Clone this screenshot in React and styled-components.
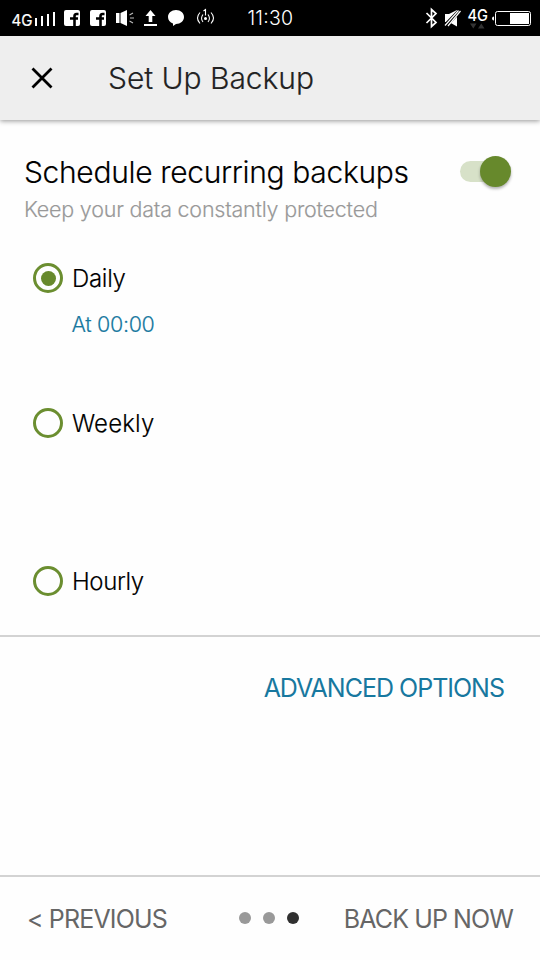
import React from "react";
import styled, { createGlobalStyle } from "styled-components";

const GlobalStyle = createGlobalStyle`
  * { box-sizing: border-box; }
  body { margin: 0; background: #fefefe; }
`;

const Screen = styled.div`
  display: flex;
  flex-direction: column;
  width: 540px;
  height: 960px;
  overflow: hidden;
  background: #fefefe;
  font-family: Inter, "Liberation Sans", sans-serif;
  font-weight: 300;
  -webkit-text-stroke: 0.15px;
  color: #000;
  white-space: nowrap;
`;

const StatusBar = styled.div`
  flex: none;
  height: 36px;
  background: #000;
`;

const StatusIcons = styled.svg`
  display: block;
  width: 540px;
  height: 36px;
  font-family: Inter, "Liberation Sans", sans-serif;
  -webkit-text-stroke: 0;
`;

const Header = styled.header`
  flex: none;
  display: flex;
  align-items: center;
  height: 84px;
  padding-left: 31px;
  gap: 55px;
  background: #eee;
  box-shadow: 0 1px 5px rgba(0, 0, 0, 0.42);
`;

const CloseButton = styled.button`
  display: flex;
  padding: 0;
  border: 0;
  background: none;
`;

const Title = styled.h1`
  margin: 0;
  font-size: 30px;
  font-weight: 300;
  line-height: 40px;
  letter-spacing: -0.05px;
  color: #222;
`;

const Schedule = styled.section`
  flex: none;
  height: 517px;
  padding: 32px 29px 0 24px;
  border-bottom: 2px solid #d3d3d3;
`;

const SettingRow = styled.div`
  display: flex;
  justify-content: space-between;
  align-items: center;
  height: 40px;
`;

const SettingTitle = styled.h2`
  margin: 0;
  font-size: 30px;
  font-weight: 300;
  line-height: 40px;
  letter-spacing: -0.34px;
`;

const Track = styled.div`
  display: flex;
  align-items: center;
  justify-content: flex-end;
  width: 51px;
  height: 21px;
  margin-bottom: 1px;
  border-radius: 11px;
  background: #d7e1c8;
`;

const Thumb = styled.div`
  flex: none;
  width: 31px;
  height: 31px;
  border-radius: 50%;
  background: #67892c;
  box-shadow: 0 2px 3px rgba(0, 0, 0, 0.3);
`;

const Hint = styled.p`
  margin: 2px 0 0;
  font-size: 21.5px;
  line-height: 31px;
  letter-spacing: -0.22px;
  color: #999;
`;

const Option = styled.div`
  display: flex;
  align-items: center;
  gap: 9px;
  height: 30px;
  margin: ${(p) => p.$top}px 0 0 9px;
`;

const Radio = styled.span`
  display: flex;
  align-items: center;
  justify-content: center;
  width: 30px;
  height: 30px;
  border: 3px solid #6b8e30;
  border-radius: 50%;

  &::after {
    content: "";
    width: 15px;
    height: 15px;
    border-radius: 50%;
    background: ${(p) => (p.$checked ? "#67892c" : "transparent")};
  }
`;

const OptionLabel = styled.span`
  padding-top: 1px;
  font-size: 24px;
  line-height: 31px;
  letter-spacing: ${(p) => p.$tracking}px;
`;

const TimeLink = styled.div`
  margin: 16px 0 0 47.5px;
  font-size: 21.5px;
  line-height: 30px;
  letter-spacing: -0.35px;
  color: #17789f;
`;

const Advanced = styled.section`
  flex: 1;
  display: flex;
  justify-content: flex-end;
  align-items: flex-start;
  padding: 31px 36px 0 0;
`;

const TextButton = styled.button`
  padding: 0;
  border: 0;
  background: none;
  font: 400 25px/40px Inter, "Liberation Sans", sans-serif;
  -webkit-text-stroke: 0;
  letter-spacing: ${(p) => p.$tracking}px;
  color: ${(p) => p.$color};
`;

const Footer = styled.footer`
  flex: none;
  display: grid;
  grid-template-columns: 1fr auto 1fr;
  align-items: center;
  height: 85px;
  padding: 0 27px;
  border-top: 2px solid #d3d3d3;

  & > :first-child { justify-self: start; }
  & > :last-child { justify-self: end; }
`;

const Dots = styled.div`
  display: flex;
  gap: 12px;
  margin-right: 2px;
  margin-bottom: 1px;
`;

const Dot = styled.span`
  width: 12px;
  height: 12px;
  border-radius: 50%;
  background: ${(p) => (p.$active ? "#303030" : "#999")};
`;

function FacebookBadge({ x }) {
  return (
    <g transform={`translate(${x} 10)`}>
      <rect width="16" height="16" rx="2" fill="#fff" />
      <path d="M14.500 4H12.500q-2 0-2 2.200V16M6 8.500h8" fill="none" stroke="#000" strokeWidth="2.600" />
    </g>
  );
}

function Status() {
  return (
    <StatusBar>
      <StatusIcons viewBox="0 0 540 36" fill="#fff">
        <text x="11.5" y="26" fontSize="16" fontWeight="400" stroke="#fff" strokeWidth="0.2" textLength="21" lengthAdjust="spacingAndGlyphs">4G</text>
        <path d="M35 18h2v8h-2zM41 16h2v10h-2zM47 14h2v12h-2zM53 12h2v14h-2z" />
        <FacebookBadge x={64} />
        <FacebookBadge x={90} />
        <path d="M116 13h3.500v10H116zM120.500 13l6.500-3v16l-6.500-3z" />
        <path d="M129.500 15l3.500-2M130 18h4M129.500 21l3.500 2" stroke="#bbb" strokeWidth="1.100" />
        <path d="M150.500 10l5 6h-3.200v6h-3.600v-6h-3.200zM144 24h13v2h-13z" />
        <path d="M176 10c4.600 0 8 3 8 7 0 4.100-3.500 7-8 7l-3 2v-2.500c-3-1-5-3.500-5-6.500 0-4 3.500-7 8-7z" />
        <g fill="none" stroke="#fff" strokeWidth="1.100">
          <path d="M200 12.500q-5 5.500 0 11M203 14.500q-3 4 0 7.500M211 12.500q5 5.500 0 11M208 14.500q3 4 0 7.500M203.500 11l2-1.500v6" />
        </g>
        <circle cx="205.500" cy="18.500" r="1.500" />
        <text x="247.500" y="25" fontSize="19.500" fontWeight="300" textLength="45.500">11:30</text>
        <path d="M426.500 13l9.500 9.500-4.500 4V9.500l4.500 4-9.500 9.500" fill="none" stroke="#fff" strokeWidth="1.700" />
        <path d="M445 14h4l8-4v16.500l-8-4.500h-4z" />
        <path d="M444.500 26.500l15.500-16" stroke="#000" strokeWidth="4.500" />
        <path d="M445 25.500l13.500-15M448 26l12.500-15" stroke="#fff" strokeWidth="1.200" />
        <text x="467.500" y="21" fontSize="16" fontWeight="500" textLength="20.500" lengthAdjust="spacingAndGlyphs">4G</text>
        <path d="M470 23.500h6.500l-3.200 5zM478 28.500h6.500l-3.200-5z" fill="#333" />
        <path d="M494 16.500q-2 0-2 2t2 2z" />
        <rect x="495.500" y="11.500" width="35" height="14" rx="2" fill="none" stroke="#fff" />
        <path d="M510 13h19v11h-19z" />
      </StatusIcons>
    </StatusBar>
  );
}

function RadioOption({ label, checked, top, tracking }) {
  return (
    <Option $top={top}>
      <Radio $checked={checked} />
      <OptionLabel $tracking={tracking}>{label}</OptionLabel>
    </Option>
  );
}

export default function App() {
  return (
    <Screen>
      <GlobalStyle />
      <Status />
      <Header>
        <CloseButton aria-label="Close">
          <svg width="22" height="22" viewBox="0 0 22 22">
            <path d="M1.500 1.500l19 19M20.500 1.500l-19 19" stroke="#000" strokeWidth="2.800" />
          </svg>
        </CloseButton>
        <Title>Set Up Backup</Title>
      </Header>
      <Schedule>
        <SettingRow>
          <SettingTitle>Schedule recurring backups</SettingTitle>
          <Track>
            <Thumb />
          </Track>
        </SettingRow>
        <Hint>Keep your data constantly protected</Hint>
        <RadioOption label="Daily" checked top={38} tracking={-0.3} />
        <TimeLink>At 00:00</TimeLink>
        <RadioOption label="Weekly" top={69} tracking={0.15} />
        <RadioOption label="Hourly" top={128} tracking={-0.4} />
      </Schedule>
      <Advanced>
        <TextButton $color="#17789f" $tracking={-1}>ADVANCED OPTIONS</TextButton>
      </Advanced>
      <Footer>
        <TextButton $color="#666" $tracking={-0.85}>&lt; PREVIOUS</TextButton>
        <Dots>
          <Dot />
          <Dot />
          <Dot $active />
        </Dots>
        <TextButton $color="#666" $tracking={-0.9}>BACK UP NOW</TextButton>
      </Footer>
    </Screen>
  );
}
